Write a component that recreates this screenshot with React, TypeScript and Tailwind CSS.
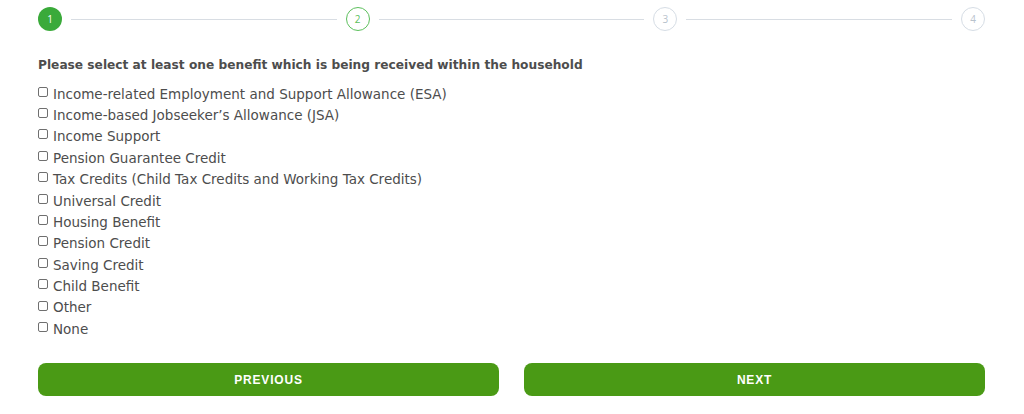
const benefits = [
  'Income-related Employment and Support Allowance (ESA)',
  'Income-based Jobseeker\u2019s Allowance (JSA)',
  'Income Support',
  'Pension Guarantee Credit',
  'Tax Credits (Child Tax Credits and Working Tax Credits)',
  'Universal Credit',
  'Housing Benefit',
  'Pension Credit',
  'Saving Credit',
  'Child Benefit',
  'Other',
  'None',
];

function Step({ n, state }: { n: number; state: 'done' | 'active' | 'todo' }) {
  if (state === 'done') {
    return (
      <div className="w-6 h-6 shrink-0 rounded-full bg-[#3aaa3a] text-white text-[10px] flex items-center justify-center">
        {n}
      </div>
    );
  }
  if (state === 'active') {
    return (
      <div className="w-6 h-6 shrink-0 rounded-full border border-[#5cbf5c] bg-white text-[#5cbf5c] text-[10px] flex items-center justify-center">
        {n}
      </div>
    );
  }
  return (
    <div className="w-6 h-6 shrink-0 rounded-full border border-[#d6dde5] bg-white text-[#b8c2cc] text-[10px] flex items-center justify-center">
      {n}
    </div>
  );
}

export default function App() {
  return (
    <div className="min-h-screen bg-white px-[38px] pt-[7px] text-[#4a4a4a]" style={{ fontFamily: '"DejaVu Sans", "Noto Sans", sans-serif' }}>
      {/* Stepper */}
      <div className="flex items-center w-[947px]" style={{ fontFamily: '"Open Sans", sans-serif' }}>
        <Step n={1} state="done" />
        <div className="flex-1 h-px bg-[#d8dde3] mx-[9px]" />
        <Step n={2} state="active" />
        <div className="flex-1 h-px bg-[#d8dde3] mx-[9px]" />
        <Step n={3} state="todo" />
        <div className="flex-1 h-px bg-[#d8dde3] mx-[9px]" />
        <Step n={4} state="todo" />
      </div>

      {/* Question */}
      <p className="mt-[26px] text-[12.2px] font-bold text-[#4d4d4d] leading-[16px]">
        Please select at least one benefit which is being received within the household
      </p>

      <ul className="mt-[10px]">
        {benefits.map((b) => (
          <li key={b} className="flex items-center h-[21.4px] text-[13.5px] text-[#4d4d4d]">
            <span className="w-[10px] h-[10px] border border-[#6f6f6f] rounded-[2px] mr-[5px] -mt-[4px] shrink-0" />
            {b}
          </li>
        ))}
      </ul>

      {/* Buttons */}
      <div className="mt-[23.5px] grid grid-cols-2 gap-[25px] w-[947px]" style={{ fontFamily: '"Liberation Sans", Arial, sans-serif' }}>
        <button className="h-[33px] rounded-[8px] bg-[#4a9a15] text-white text-[12px] font-bold tracking-[0.8px]">
          PREVIOUS
        </button>
        <button className="h-[33px] rounded-[8px] bg-[#4a9a15] text-white text-[12px] font-bold tracking-[0.8px]">
          NEXT
        </button>
      </div>
    </div>
  );
}
